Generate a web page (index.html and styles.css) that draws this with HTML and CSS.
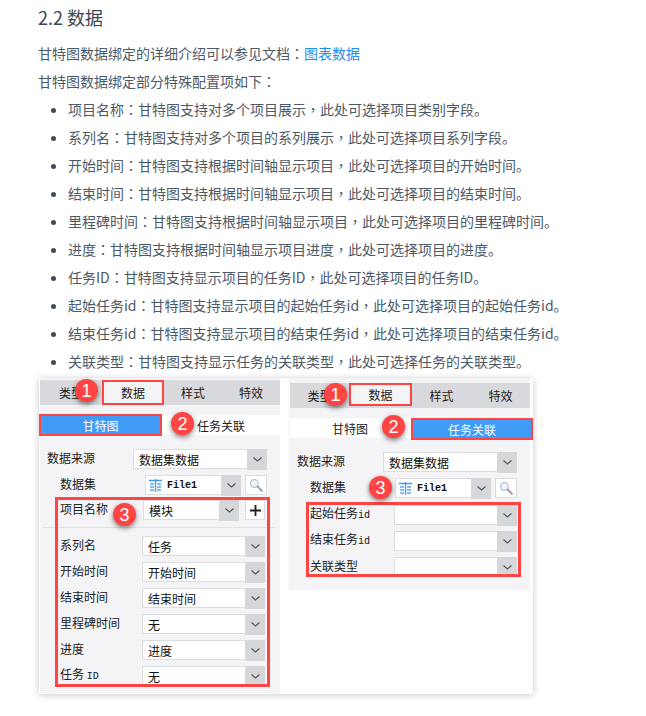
FILE: index.html
```html
<!DOCTYPE html>
<html lang="zh-CN">
<head>
<meta charset="utf-8">
<title>2.2 数据</title>
<link rel="stylesheet" href="styles.css">
</head>
<body>
<main class="doc">
  <h2 class="title">2.2 数据</h2>
  <p class="para">甘特图数据绑定的详细介绍可以参见文档<span class="pc" lang="zh-TW">：</span><a class="link" href="#">图表数据</a></p>
  <p class="para">甘特图数据绑定部分特殊配置项如下<span class="pc" lang="zh-TW">：</span></p>
  <ul class="list">
    <li>项目名称<span class="pc" lang="zh-TW">：</span>甘特图支持对多个项目展示<span class="pc" lang="zh-TW">，</span>此处可选择项目类别字段。</li>
    <li>系列名<span class="pc" lang="zh-TW">：</span>甘特图支持对多个项目的系列展示<span class="pc" lang="zh-TW">，</span>此处可选择项目系列字段。</li>
    <li>开始时间<span class="pc" lang="zh-TW">：</span>甘特图支持根据时间轴显示项目<span class="pc" lang="zh-TW">，</span>此处可选择项目的开始时间。</li>
    <li>结束时间<span class="pc" lang="zh-TW">：</span>甘特图支持根据时间轴显示项目<span class="pc" lang="zh-TW">，</span>此处可选择项目的结束时间。</li>
    <li>里程碑时间<span class="pc" lang="zh-TW">：</span>甘特图支持根据时间轴显示项目<span class="pc" lang="zh-TW">，</span>此处可选择项目的里程碑时间。</li>
    <li>进度<span class="pc" lang="zh-TW">：</span>甘特图支持根据时间轴显示项目进度<span class="pc" lang="zh-TW">，</span>此处可选择项目的进度。</li>
    <li>任务ID<span class="pc" lang="zh-TW">：</span>甘特图支持显示项目的任务ID<span class="pc" lang="zh-TW">，</span>此处可选择项目的任务ID。</li>
    <li>起始任务id<span class="pc" lang="zh-TW">：</span>甘特图支持显示项目的起始任务id<span class="pc" lang="zh-TW">，</span>此处可选择项目的起始任务id。</li>
    <li>结束任务id<span class="pc" lang="zh-TW">：</span>甘特图支持显示项目的结束任务id<span class="pc" lang="zh-TW">，</span>此处可选择项目的结束任务id。</li>
    <li>关联类型<span class="pc" lang="zh-TW">：</span>甘特图支持显示任务的关联类型<span class="pc" lang="zh-TW">，</span>此处可选择任务的关联类型。</li>
  </ul>

  <div class="shot">
    <section class="panel panel-left">
      <div class="tabs"><span class="tab">类型</span><span class="tab tab-on">数据</span><span class="tab">样式</span><span class="tab">特效</span></div>
      <div class="subtabs"><span class="sub sub-on">甘特图</span><span class="sub">任务关联</span></div>
      <div class="row row-source"><span class="lab">数据来源</span><div class="sel"><span class="val">数据集数据</span><span class="arr"><svg class="chev" viewBox="0 0 9 5"><path d="M.5.5 4.5 4 8.5.5"/></svg></span></div></div>
      <div class="row row-set"><span class="lab">数据集</span><div class="sel sel-mid"><span class="val val-file"><svg class="file" viewBox="0 0 13 13"><path class="file-line" d="M6.5 0V13M0 1.5H13"/><path class="file-grid" d="M1 5H5M8 5H12M1 8H5M8 8H12M1 11H5M8 11H12"/></svg><span class="mono">File1</span></span><span class="arr"><svg class="chev" viewBox="0 0 9 5"><path d="M.5.5 4.5 4 8.5.5"/></svg></span></div><span class="search"><svg viewBox="0 0 18 18"><circle cx="7" cy="7" r="5" class="lens"/><path d="M11 11 16.5 16.5" class="handle"/></svg></span></div>

      <div class="redbox redbox-left">
        <div class="row row-in"><span class="lab lab-in">项目名称</span><div class="sel sel-mid"><span class="val">模块</span><span class="arr"><svg class="chev" viewBox="0 0 9 5"><path d="M.5.5 4.5 4 8.5.5"/></svg></span></div><span class="plus"><svg viewBox="0 0 12 12"><path d="M6 0V12M0 6H12"/></svg></span></div>
        <div class="rows-left">
          <div class="row row-in"><span class="lab lab-in2">系列名</span><div class="sel sel-wide"><span class="val">任务</span><span class="arr"><svg class="chev" viewBox="0 0 9 5"><path d="M.5.5 4.5 4 8.5.5"/></svg></span></div></div>
          <div class="row row-in"><span class="lab lab-in2">开始时间</span><div class="sel sel-wide"><span class="val">开始时间</span><span class="arr"><svg class="chev" viewBox="0 0 9 5"><path d="M.5.5 4.5 4 8.5.5"/></svg></span></div></div>
          <div class="row row-in"><span class="lab lab-in2">结束时间</span><div class="sel sel-wide"><span class="val">结束时间</span><span class="arr"><svg class="chev" viewBox="0 0 9 5"><path d="M.5.5 4.5 4 8.5.5"/></svg></span></div></div>
          <div class="row row-in"><span class="lab lab-in2">里程碑时间</span><div class="sel sel-wide"><span class="val">无</span><span class="arr"><svg class="chev" viewBox="0 0 9 5"><path d="M.5.5 4.5 4 8.5.5"/></svg></span></div></div>
          <div class="row row-in"><span class="lab lab-in2">进度</span><div class="sel sel-wide"><span class="val">进度</span><span class="arr"><svg class="chev" viewBox="0 0 9 5"><path d="M.5.5 4.5 4 8.5.5"/></svg></span></div></div>
          <div class="row row-in"><span class="lab lab-in2">任务 <span class="mono mono-lab">ID</span></span><div class="sel sel-wide"><span class="val">无</span><span class="arr"><svg class="chev" viewBox="0 0 9 5"><path d="M.5.5 4.5 4 8.5.5"/></svg></span></div></div>
        </div>
      </div>

      <span class="rule"></span>
      <span class="badge b-l1">1</span>
      <span class="badge b-l2">2</span>
      <span class="badge b-l3">3</span>
    </section>

    <section class="panel panel-right">
      <div class="tabs"><span class="tab">类型</span><span class="tab tab-on tab-on-r">数据</span><span class="tab">样式</span><span class="tab">特效</span></div>
      <div class="subtabs"><span class="sub">甘特图</span><span class="sub sub-on sub-on-r">任务关联</span></div>
      <div class="row row-source"><span class="lab">数据来源</span><div class="sel"><span class="val">数据集数据</span><span class="arr"><svg class="chev" viewBox="0 0 9 5"><path d="M.5.5 4.5 4 8.5.5"/></svg></span></div></div>
      <div class="row row-set"><span class="lab">数据集</span><div class="sel sel-mid"><span class="val val-file"><svg class="file" viewBox="0 0 13 13"><path class="file-line" d="M6.5 0V13M0 1.5H13"/><path class="file-grid" d="M1 5H5M8 5H12M1 8H5M8 8H12M1 11H5M8 11H12"/></svg><span class="mono">File1</span></span><span class="arr"><svg class="chev" viewBox="0 0 9 5"><path d="M.5.5 4.5 4 8.5.5"/></svg></span></div><span class="search"><svg viewBox="0 0 18 18"><circle cx="7" cy="7" r="5" class="lens"/><path d="M11 11 16.5 16.5" class="handle"/></svg></span></div>

      <div class="redbox redbox-right">
        <div class="row row-in"><span class="lab lab-in3">起始任务<span class="mono mono-lab">id</span></span><div class="sel sel-wide"><span class="val"></span><span class="arr"><svg class="chev" viewBox="0 0 9 5"><path d="M.5.5 4.5 4 8.5.5"/></svg></span></div></div>
        <div class="row row-in"><span class="lab lab-in3">结束任务<span class="mono mono-lab">id</span></span><div class="sel sel-wide"><span class="val"></span><span class="arr"><svg class="chev" viewBox="0 0 9 5"><path d="M.5.5 4.5 4 8.5.5"/></svg></span></div></div>
        <div class="row row-in"><span class="lab lab-in3">关联类型</span><div class="sel sel-wide"><span class="val"></span><span class="arr"><svg class="chev" viewBox="0 0 9 5"><path d="M.5.5 4.5 4 8.5.5"/></svg></span></div></div>
      </div>

      <span class="badge b-r1">1</span>
      <span class="badge b-r2">2</span>
      <span class="badge b-r3">3</span>
    </section>
  </div>
</main>
</body>
</html>
```
FILE: styles.css
```css
* { box-sizing: border-box; }
html, body { margin: 0; padding: 0; background: #fff; }
body { font-family: "Noto Sans CJK SC", sans-serif; color: #4c5a68; font-size: 14px; }
.doc { padding: 4px 0 0 38px; height: 716px; overflow: hidden; }
.title { margin: 0; font-size: 18px; font-weight: 400; line-height: 26px; color: #3b4754; }
.para { margin: 0; line-height: 28px; }
.title + .para { margin-top: 9px; }
.pc { font-family: "Noto Sans CJK TC", sans-serif; }
.link { color: #1e8cf0; text-decoration: none; }
.list { margin: 0; padding: 0 0 0 30px; }
.list li { line-height: 28px; }
.list li::marker { color: #3e4c5c; }

.shot { display: flex; gap: 10px; width: 494px; height: 316px; margin: 3px 0 0 1px; padding: 0 0 0 1px; background: #fff; box-shadow: 0 1px 7px rgba(0,0,0,.22); color: #222; font-size: 12px; }
.panel { position: relative; width: 240px; background: #f4f4f6; }
.panel-left { height: 315px; padding-top: 2px; }
.panel-right { height: 212px; padding-top: 5px; box-shadow: -2px 0 2px rgba(0,0,0,.04); }

.tabs { display: flex; height: 25px; background: #d8d9dc; }
.tab { flex: 1; display: flex; align-items: center; justify-content: center; }
.panel-left .tab:first-child { flex: 0 0 62px; }
.tab-on { background: #f4f4f6; border: 2px solid #f44; }
.tab-on-r { height: 23px; }
.subtabs { display: flex; height: 20px; margin-top: 10px; background: #fff; }
.sub { flex: 1; display: flex; align-items: center; justify-content: center; }
.sub-on { background: #409cf7; color: #fff; border: 2px solid #f44; height: 22px; margin: -1px 0 0 -1px; flex: 0 0 123px; }
.sub-on-r { margin: 0 -3px 0 1px; flex-basis: 122px; }

.row { display: flex; align-items: center; height: 20px; }
.row-source { margin-top: 14px; padding-left: 7px; }
.row-set { margin-top: 6px; padding-left: 20px; }
.lab { display: block; width: 86px; line-height: 20px; white-space: nowrap; position: relative; top: -1px; }
.row-set .lab { width: 85px; }
.lab-in { width: 85px; padding-left: 2px; }
.lab-in2 { width: 84px; padding-left: 2px; }
.lab-in3 { width: 85px; padding-left: 1px; }

.sel { display: flex; width: 134px; height: 20px; background: #fff; border: 1.5px solid #dcdde0; border-right: 0; }
.sel-mid { width: 96px; }
.sel-wide { width: 123px; }
.val { flex: 1; display: flex; align-items: center; gap: 5px; padding-left: 5px; line-height: 17px; color: #111; }
.val-file { padding-left: 3px; }
.arr { flex: 0 0 20px; margin: -1.5px 0; display: flex; align-items: center; justify-content: center; background: #d6d7da; }
.chev { width: 9px; height: 5px; fill: none; stroke: #555; stroke-width: 1.1; }

.mono { font-family: "Liberation Mono", monospace; font-size: 10px; font-weight: 700; color: #111; }
.mono-lab { font-weight: 400; font-size: 10px; }
.file { width: 13px; height: 13px; flex: none; fill: none; }
.file-line { stroke: #3f9af0; stroke-width: 1.3; }
.file-grid { stroke: #5da8ee; stroke-width: 1.6; }

.search { width: 22px; height: 20px; margin-left: 4px; display: flex; align-items: center; justify-content: center; background: #fff; border: 1.5px solid #dcdde0; }
.search svg { width: 14px; height: 14px; }
.lens { fill: #eef4fa; stroke: #b5c2cf; stroke-width: 1.6; }
.handle { stroke: #9aa3ad; stroke-width: 2.6; stroke-linecap: round; fill: none; }

.plus { width: 20px; height: 20px; margin-left: 6px; display: flex; align-items: center; justify-content: center; background: #fff; border: 1px solid #dcdde0; }
.plus svg { width: 11px; height: 11px; fill: none; stroke: #222; stroke-width: 2; }

.redbox { position: relative; z-index: 1; border: 3px solid #f44; overflow: hidden; }
.redbox-left { width: 215px; height: 190px; margin: 2px 0 0 15px; }
.redbox-right { width: 215px; height: 75px; margin: 4px 0 0 16px; display: flex; flex-direction: column; gap: 6px; }
.rows-left { margin-top: 16px; display: flex; flex-direction: column; gap: 6px; }

.rule { position: absolute; left: 3px; top: 149px; width: 232px; height: 1px; background: #e2e2e2; }

.badge { position: absolute; z-index: 2; width: 23px; height: 23px; border-radius: 50%; display: flex; align-items: center; justify-content: center; background: #f44; color: #fff; font: 18px/1 "Liberation Sans", sans-serif; box-shadow: 0 2px 5px rgba(0,0,0,.5); }
.b-l1 { left: 35px; top: 1px; }
.b-l2 { left: 131px; top: 34px; }
.b-l3 { left: 73px; top: 125px; }
.b-r1 { left: 34px; top: 5px; }
.b-r2 { left: 92px; top: 37px; }
.b-r3 { left: 79px; top: 98px; }
```
